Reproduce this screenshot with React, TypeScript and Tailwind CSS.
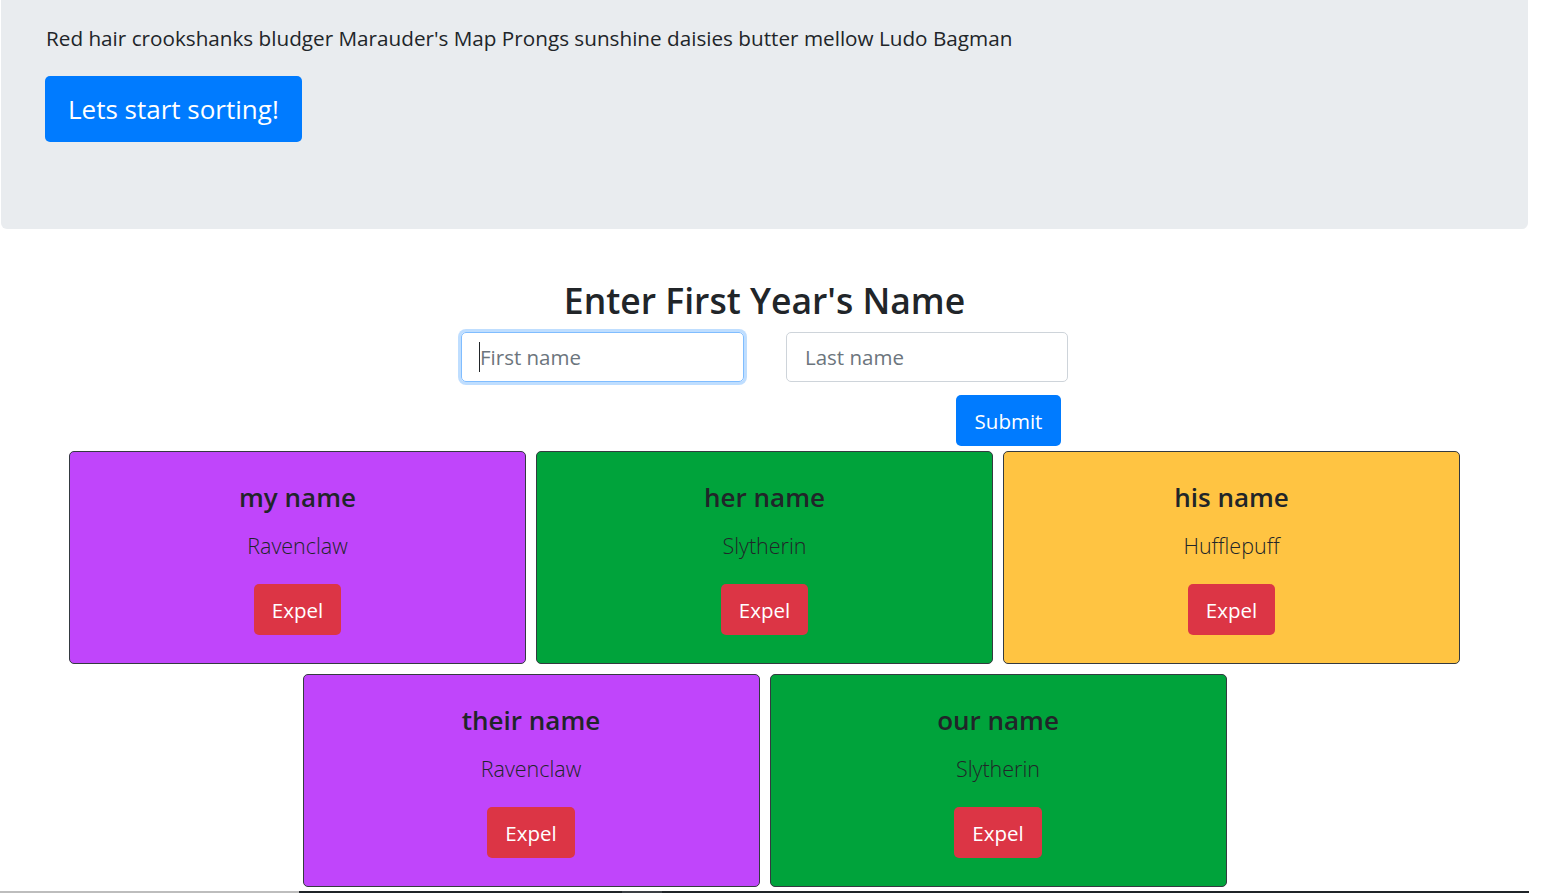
import React from 'react';

type Student = { name: string; house: string };

const students: Student[] = [
  { name: 'my name', house: 'Ravenclaw' },
  { name: 'her name', house: 'Slytherin' },
  { name: 'his name', house: 'Hufflepuff' },
  { name: 'their name', house: 'Ravenclaw' },
  { name: 'our name', house: 'Slytherin' },
];

const houseColor = (house: string) => {
  switch (house) {
    case 'Ravenclaw': return 'bg-[#c045fb]';
    case 'Slytherin': return 'bg-[#00a33b]';
    case 'Hufflepuff': return 'bg-[#ffc442]';
    default: return 'bg-[#4a70c9]';
  }
};

function StudentCard({ student }: { student: Student }) {
  return (
    <div
      className={`w-[457px] h-[213px] rounded-[5px] border border-[#343a40] flex flex-col items-center pt-[28px] ${houseColor(student.house)}`}
    >
      <h3 className="text-[26px] leading-[34px] font-semibold text-[#212529]">{student.name}</h3>
      <p className="mt-[17px] text-[21.5px] leading-[30px] font-light text-[#212529]">{student.house}</p>
      <button className="mt-[23px] h-[51px] px-[18px] rounded-[5px] bg-[#dc3545] text-white text-[20.5px] leading-[30px]">
        Expel
      </button>
    </div>
  );
}

export default function App() {
  return (
    <div className="w-[1529px] min-h-[893px] bg-white text-[#212529] font-['Open_Sans',sans-serif]">
      {/* Jumbotron */}
      <div className="ml-[1px] w-[1527px] rounded-b-[6px] bg-[#e9ecef] pl-[44px] pt-[26px] pb-[87px]">
        <p className="text-[20.7px] leading-[24px] pl-[1px]">
          Red hair crookshanks bludger Marauder's Map Prongs sunshine daisies butter mellow Ludo Bagman
        </p>
        <button className="mt-[26px] h-[66px] rounded-[5px] bg-[#007bff] px-[23px] text-[26px] leading-[42px] text-white">
          Lets start sorting!
        </button>
      </div>

      {/* Form */}
      <h1 className="mt-[47px] text-center text-[35.5px] leading-[48px] font-semibold">Enter First Year's Name</h1>
      <div className="mt-[8px] flex justify-center gap-[42px]">
        <div className="relative">
          <input
            placeholder="First name"
            className="w-[283px] h-[50px] rounded-[5px] border border-[#80bdff] px-[18px] text-[20.5px] text-[#495057] placeholder:text-[#6c757d] outline-none shadow-[0_0_0_3px_rgba(0,123,255,0.25)]"
          />
          {/* text caret */}
          <span className="absolute left-[18px] top-[10px] h-[30px] w-px bg-[#212529]" />
        </div>
        <input
          placeholder="Last name"
          className="w-[282px] h-[50px] rounded-[5px] border border-[#ced4da] px-[18px] text-[20.5px] text-[#495057] placeholder:text-[#6c757d] outline-none"
        />
      </div>
      <div className="flex justify-center">
        <div className="w-[607px] flex justify-end pr-[7px] pt-[13px]">
          <button className="h-[51px] w-[105px] rounded-[5px] bg-[#007bff] text-white text-[20.5px] leading-[30px]">
            Submit
          </button>
        </div>
      </div>

      {/* Cards */}
      <div className="mt-[5px] mx-auto w-[1391px] flex flex-wrap justify-center gap-[10px]">
        {students.map((s, i) => (
          <StudentCard key={i} student={s} />
        ))}
      </div>

      {/* bottom edge */}
      <div className="mt-[4px] flex h-[2px]">
        <div className="w-[299px] bg-[#bdbdbd]" />
        <div className="w-[323px] bg-[#1f2428]" />
        <div className="w-[40px] bg-[#3a3f44]" />
        <div className="flex-1 bg-[#1f2428]" />
      </div>
    </div>
  );
}
